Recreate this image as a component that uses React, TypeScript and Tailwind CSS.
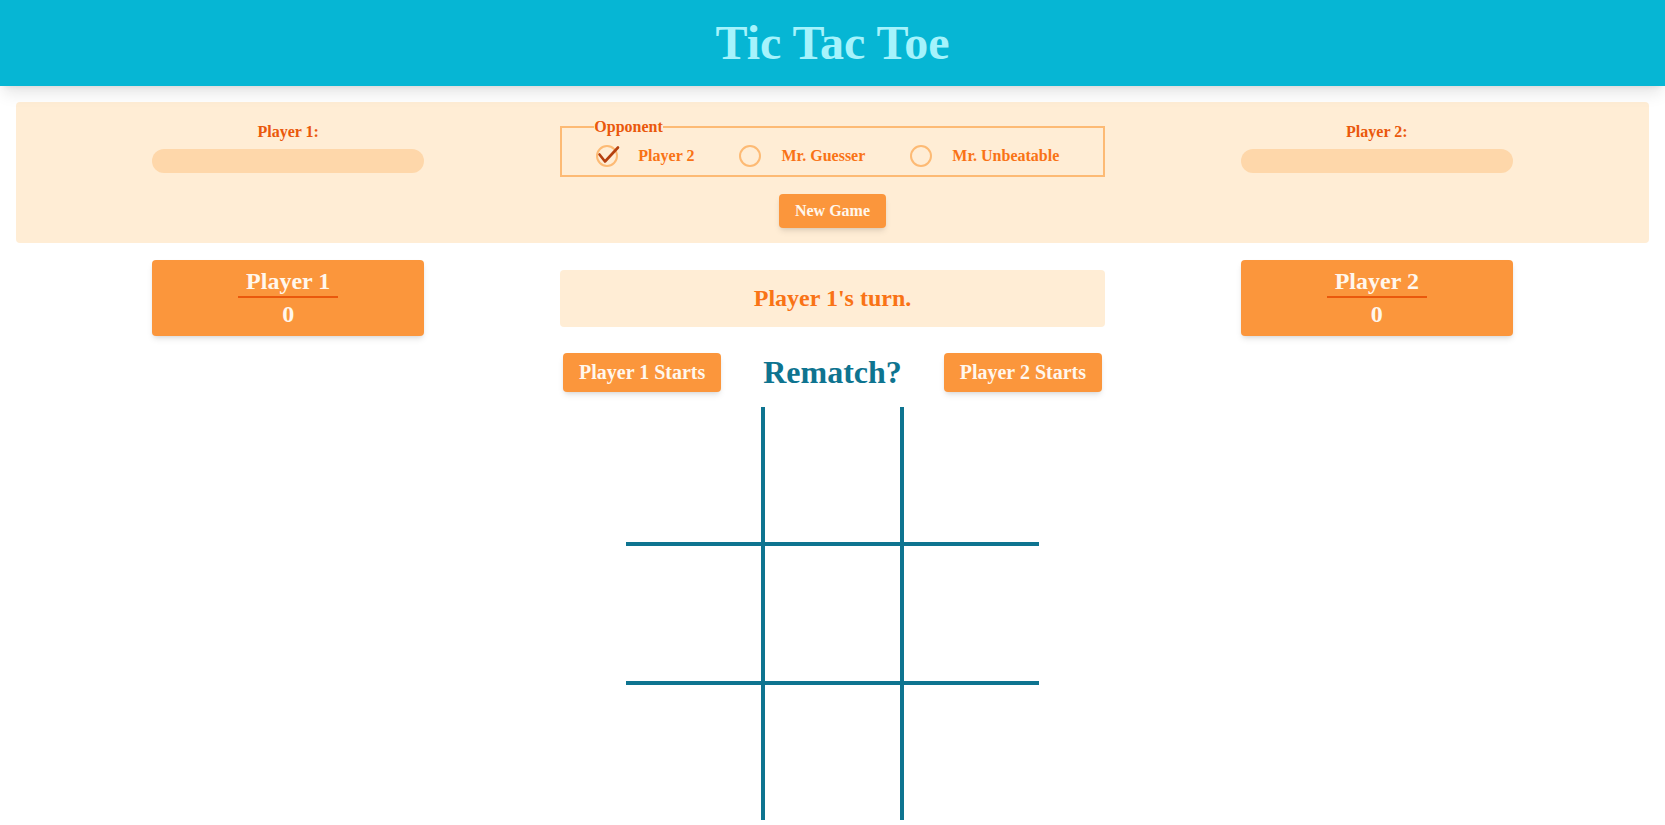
import { useState } from "react";

type Opponent = "player" | "guesser" | "unbeatable";

const OPPONENTS: { id: Opponent; label: string }[] = [
  { id: "player", label: "Player 2" },
  { id: "guesser", label: "Mr. Guesser" },
  { id: "unbeatable", label: "Mr. Unbeatable" },
];

// cell borders draw the board lines: right edge on first two columns, bottom on first two rows
const CELL_CLASSES = [
  "border-r-4 border-b-4",
  "border-r-4 border-b-4",
  "border-b-4",
  "border-r-4 border-b-4",
  "border-r-4 border-b-4",
  "border-b-4",
  "border-r-4",
  "border-r-4",
  "",
];

function NameField({ label }: { label: string }) {
  return (
    <div className="flex flex-col items-center pt-[5px]">
      <label className="font-bold text-[#ea580c]">{label}</label>
      <input
        type="text"
        className="mt-2 h-6 w-1/2 rounded-full bg-[#fed7aa] px-3 outline-none"
      />
    </div>
  );
}

function ScoreCard({ name, score }: { name: string; score: number }) {
  return (
    <div className="flex w-1/2 flex-col items-center justify-self-center rounded bg-[#fb963c] pt-[8px] pb-[7px] text-[24px] font-bold text-[#fff7ed] shadow-md">
      <span className="border-b-2 border-[#ea580c] px-2">{name}</span>
      <span className="mt-[3px]">{score}</span>
    </div>
  );
}

export default function App() {
  const [opponent, setOpponent] = useState<Opponent>("player");
  const [board] = useState<string[]>(Array(9).fill(""));

  return (
    <div className="min-h-screen bg-white font-['Liberation_Serif',serif] leading-[1.15]">
      <header className="relative z-10 flex h-[86px] items-center justify-center bg-[#06b6d4] shadow-lg">
        <h1 className="text-[48px] leading-none font-bold text-[#a5f3fc]">Tic Tac Toe</h1>
      </header>

      {/* Settings panel */}
      <section className="mx-4 mt-4 grid grid-cols-3 rounded bg-[#ffedd5] pt-4 pb-[15px]">
        <NameField label="Player 1:" />

        <div className="flex flex-col items-center">
          <fieldset className="w-full border-2 border-[#fdba74] pl-[32px] pt-[9px] pb-[8px]">
            <legend className="font-bold text-[#ea580c]">Opponent</legend>
            <div className="flex items-center gap-[45px] pl-[2px]">
              {OPPONENTS.map((o) => (
                <label
                  key={o.id}
                  className="flex cursor-pointer items-center gap-5 font-bold text-[#f97316]"
                  onClick={() => setOpponent(o.id)}
                >
                  <span className="relative h-[22px] w-[22px] shrink-0 rounded-full border-2 border-[#fdba74]">
                    {opponent === o.id && (
                      <svg
                        viewBox="0 0 22 22"
                        className="absolute -top-[2px] -left-[2px] h-[22px] w-[22px] overflow-visible"
                        fill="none"
                      >
                        <polyline
                          points="3.5,9.5 9,16.5 22,2.5"
                          stroke="#b5400f"
                          strokeWidth="2.6"
                          strokeLinecap="round"
                          strokeLinejoin="round"
                        />
                      </svg>
                    )}
                  </span>
                  {o.label}
                </label>
              ))}
            </div>
          </fieldset>
          <button className="mt-[17px] rounded bg-[#fb963c] px-4 py-2 leading-[18px] font-bold text-[#fff7ed] shadow-md">
            New Game
          </button>
        </div>

        <NameField label="Player 2:" />
      </section>

      {/* Scores and status */}
      <section className="mx-4 mt-[17px] grid grid-cols-3 items-start">
        <ScoreCard name="Player 1" score={0} />
        <div className="mt-[10px] flex h-[57px] items-center justify-center rounded bg-[#ffedd5] text-[24px] font-bold text-[#f97316]">
          Player 1's turn.
        </div>
        <ScoreCard name="Player 2" score={0} />
      </section>

      <div className="mx-auto mt-[17px] flex w-[545px] items-center justify-between px-[3px]">
        <button className="rounded bg-[#fb963c] px-4 py-2 text-[20px] font-bold text-[#fff7ed] shadow-md">
          Player 1 Starts
        </button>
        <span className="text-[32px] font-bold text-[#0e7490]">Rematch?</span>
        <button className="rounded bg-[#fb963c] px-4 py-2 text-[20px] font-bold text-[#fff7ed] shadow-md">
          Player 2 Starts
        </button>
      </div>

      {/* Board */}
      <div className="mx-auto mt-[15px] grid w-[413px] grid-cols-[139px_139px_135px] grid-rows-[139px_139px_135px]">
        {board.map((v, i) => (
          <div
            key={i}
            className={`${CELL_CLASSES[i]} flex items-center justify-center border-[#0e7490] text-6xl font-bold text-[#0e7490]`}
          >
            {v}
          </div>
        ))}
      </div>
    </div>
  );
}
